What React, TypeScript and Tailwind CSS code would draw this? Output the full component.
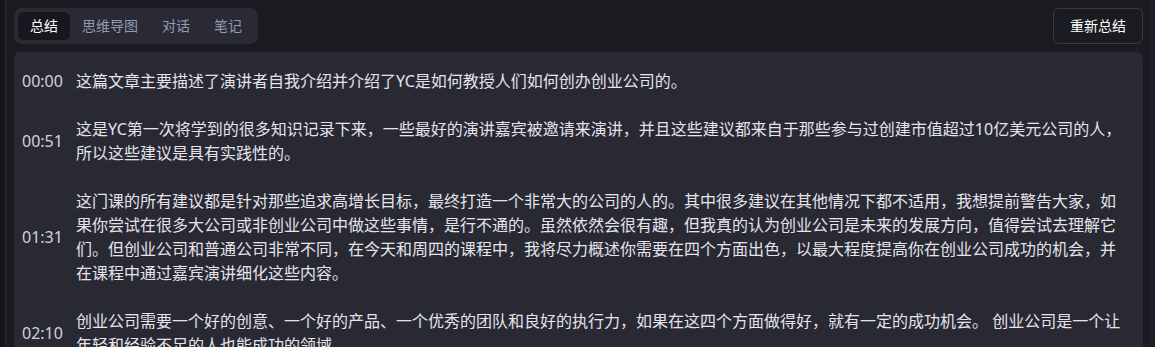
const tabs = ['总结', '思维导图', '对话', '笔记'];

const items = [
  {
    time: '00:00',
    text: '这篇文章主要描述了演讲者自我介绍并介绍了YC是如何教授人们如何创办创业公司的。',
  },
  {
    time: '00:51',
    text: '这是YC第一次将学到的很多知识记录下来，一些最好的演讲嘉宾被邀请来演讲，并且这些建议都来自于那些参与过创建市值超过10亿美元公司的人，所以这些建议是具有实践性的。',
  },
  {
    time: '01:31',
    text: '这门课的所有建议都是针对那些追求高增长目标，最终打造一个非常大的公司的人的。其中很多建议在其他情况下都不适用，我想提前警告大家，如果你尝试在很多大公司或非创业公司中做这些事情，是行不通的。虽然依然会很有趣，但我真的认为创业公司是未来的发展方向，值得尝试去理解它们。但创业公司和普通公司非常不同，在今天和周四的课程中，我将尽力概述你需要在四个方面出色，以最大程度提高你在创业公司成功的机会，并在课程中通过嘉宾演讲细化这些内容。',
  },
  {
    time: '02:10',
    text: '创业公司需要一个好的创意、一个好的产品、一个优秀的团队和良好的执行力，如果在这四个方面做得好，就有一定的成功机会。 创业公司是一个让年轻和经验不足的人也能成功的领域。',
  },
];

export default function App() {
  return (
    <div
      className="flex h-[347px] w-full overflow-hidden bg-[#1b1b22]"
      style={{ fontFamily: '"Segoe UI", "Noto Sans", "Noto Sans CJK SC", sans-serif' }}
    >
      <div className="w-[5px] shrink-0 bg-[#15151b]" />
      <div className="w-px shrink-0 bg-[#2b2b33]" />
      <div className="flex min-w-0 flex-1 flex-col pl-2 pr-[7px]">
        <div className="flex shrink-0 items-center justify-between py-2">
          <div className="flex rounded-lg bg-[#2a2a35] p-1">
            {tabs.map((t, i) => (
              <button
                key={t}
                className={
                  i === 0
                    ? 'rounded-md bg-[#17171d] px-3 py-1 text-sm leading-5 text-white'
                    : 'rounded-md px-3 py-1 text-sm leading-5 text-[#8e9cb2]'
                }
              >
                {t}
              </button>
            ))}
          </div>
          <button className="h-9 rounded-md border border-[#3a3a44] bg-[#1b1b22] px-4 text-sm text-white">
            重新总结
          </button>
        </div>
        <div className="mt-0 flex-1 rounded-t-md bg-[#292934] pl-2 pr-[21px] pt-[17px]">
          <div className="flex flex-col gap-6">
            {items.map((it) => (
              <div key={it.time} className="flex items-center">
                <div className="w-[54px] shrink-0 text-[16px] leading-6 text-[#d2d3db]">{it.time}</div>
                <div className="min-w-0 flex-1 text-[16px] leading-6 text-[#e4e4ea]">{it.text}</div>
              </div>
            ))}
          </div>
        </div>
      </div>
      <div className="w-px shrink-0 bg-[#24242c]" />
      <div className="w-[4px] shrink-0 bg-[#1c1f2b]" />
    </div>
  );
}
